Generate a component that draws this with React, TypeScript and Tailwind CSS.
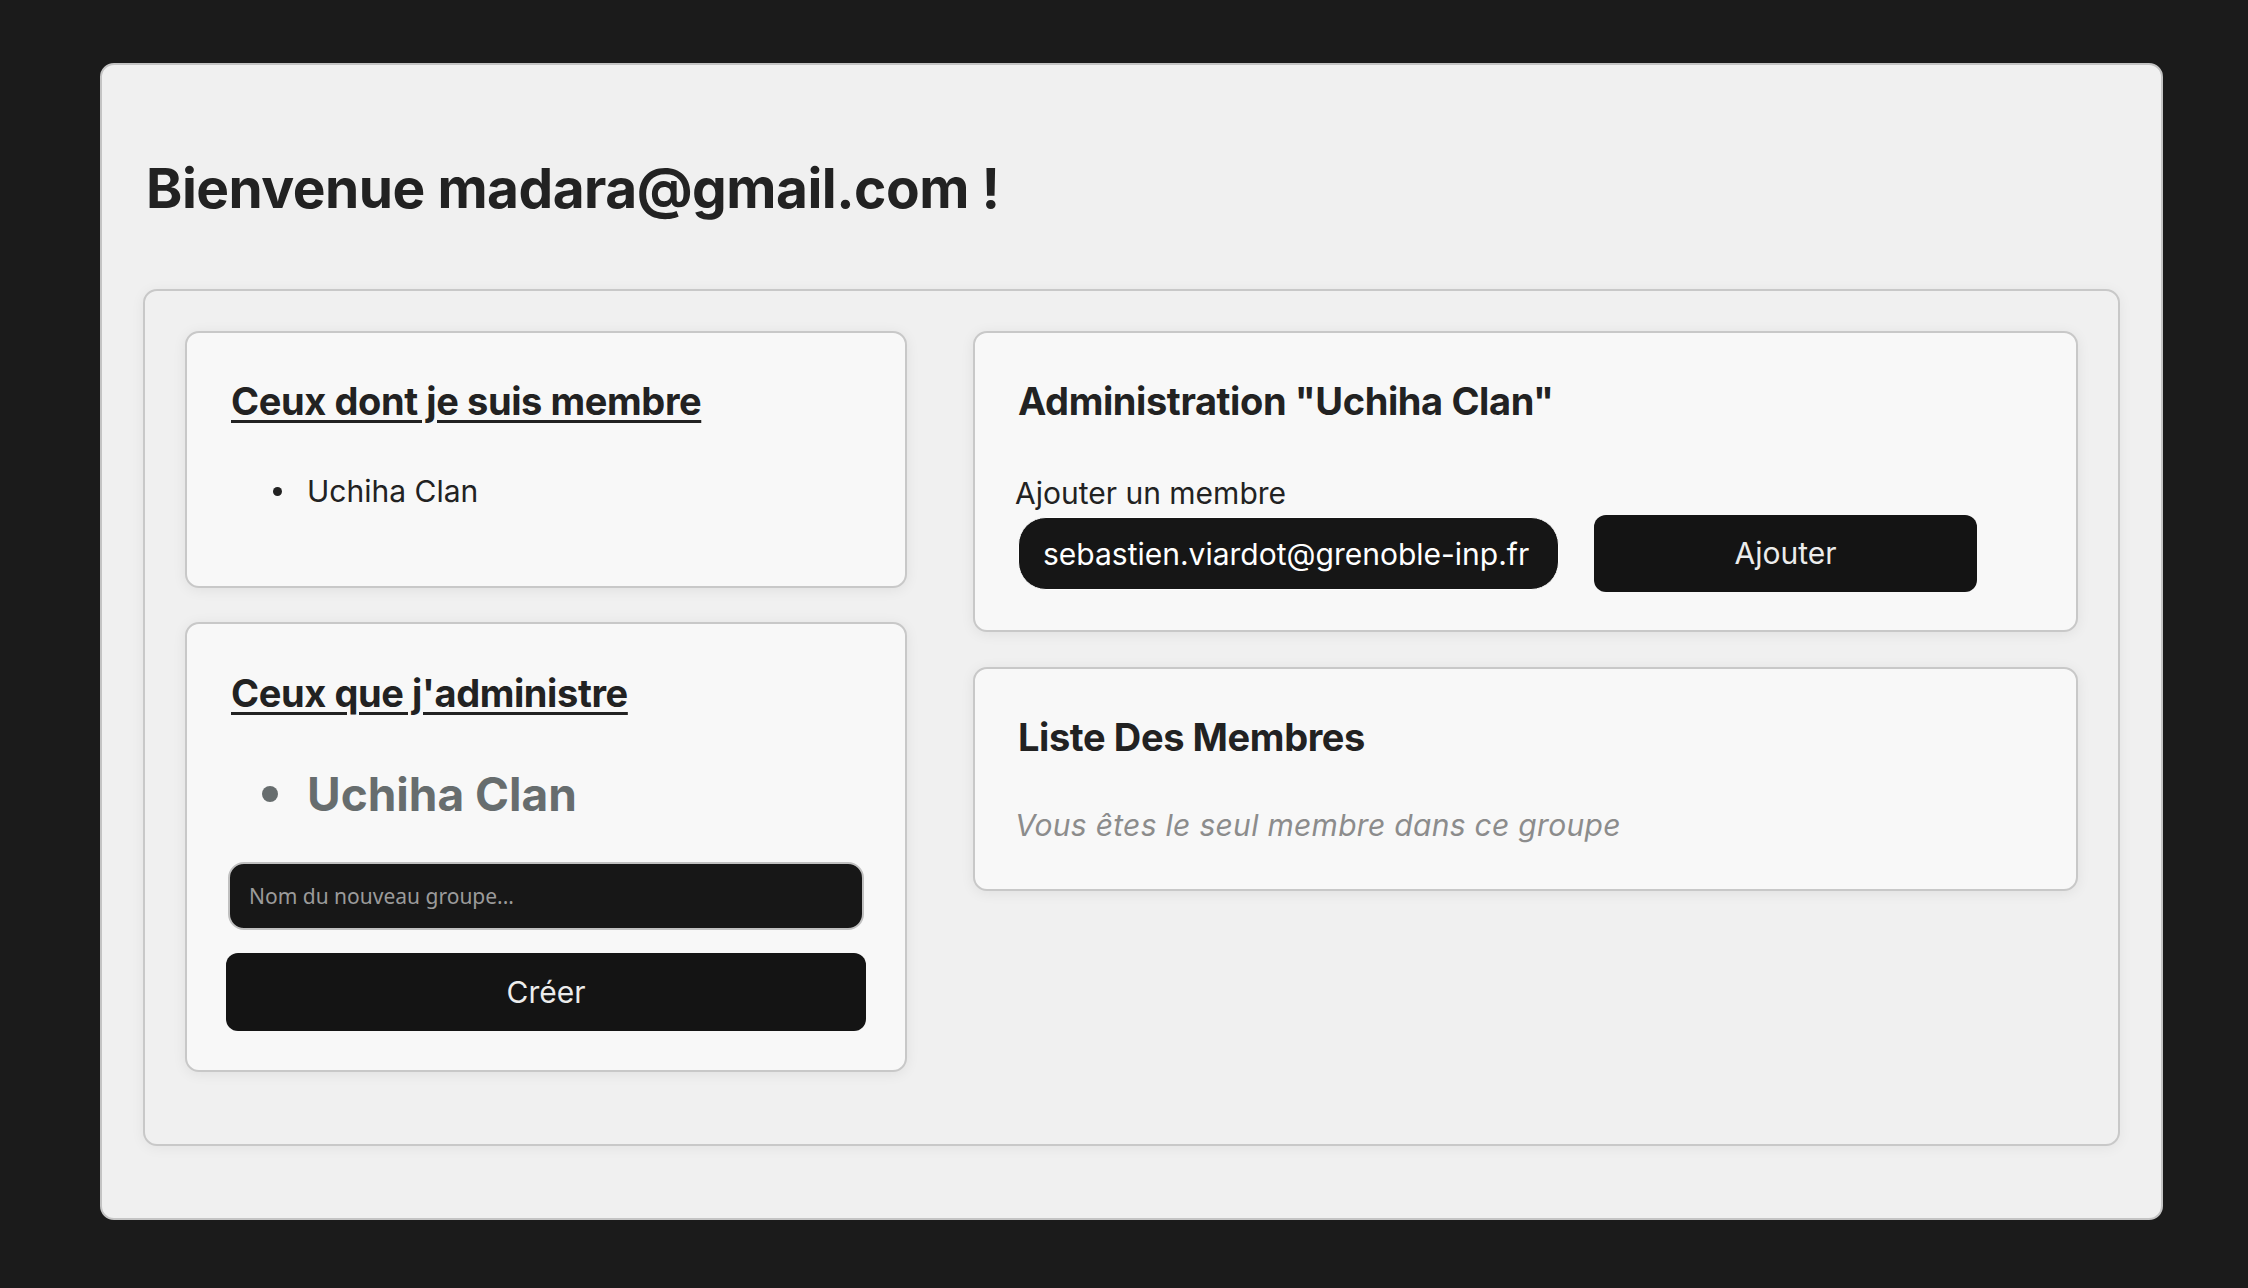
import React from 'react';

const font = { fontFamily: 'Inter, "Noto Sans", sans-serif' };

function Card({ children, className = '' }: { children: React.ReactNode; className?: string }) {
    return (
        <div
            className={`bg-[#f8f8f8] border-2 border-[#c8c8c8] rounded-[14px] shadow-[0_2px_14px_rgba(0,0,0,0.07)] ${className}`}
        >
            {children}
        </div>
    );
}

export default function App() {
    return (
        <div className="min-h-screen bg-[#1b1b1b] pt-[63px] pb-[68px] pl-[100px] pr-[85px] text-[#222]" style={font}>
            <div className="bg-[#f0f0f0] border-2 border-[#c4c4c4] rounded-[14px] px-[41px] pt-[90px] pb-[72px]">
                <h1 className="ml-[3px] text-[55px] leading-[67px] font-bold tracking-[-0.5px] text-[#222]">
                    Bienvenue madara@gmail.com !
                </h1>

                <div className="mt-[67px] bg-[#f0f0f0] border-2 border-[#c8c8c8] rounded-[14px] shadow-[0_2px_14px_rgba(0,0,0,0.06)] px-[40px] pt-[40px] pb-[72px] flex items-start gap-[66px]">
                    {/* colonne gauche */}
                    <div className="w-[722px] flex flex-col gap-[34px]">
                        <Card className="px-[44px] pt-[46px] pb-[77px]">
                            <h2 className="text-[38px] leading-[44px] font-bold tracking-[-0.4px] underline underline-offset-[5px] decoration-[3px]">
                                Ceux dont je suis membre
                            </h2>
                            <ul className="mt-[50px]">
                                <li className="flex items-center gap-[25px] pl-[42px] text-[30px] leading-[36px]">
                                    <span className="w-[9px] h-[9px] rounded-full bg-[#222]" />
                                    Uchiha Clan
                                </li>
                            </ul>
                        </Card>

                        <Card className="px-[44px] pt-[47px] pb-[39px]">
                            <h2 className="text-[38px] leading-[44px] font-bold tracking-[-0.4px] underline underline-offset-[5px] decoration-[3px]">
                                Ceux que j'administre
                            </h2>
                            <ul className="mt-[51px]">
                                <li className="flex items-center gap-[29px] pl-[31px] text-[46px] leading-[56px] font-bold text-[#676d6e]">
                                    <span className="w-[16px] h-[16px] rounded-full bg-[#676d6e]" />
                                    Uchiha Clan
                                </li>
                            </ul>
                            <input
                                className="mt-[40px] ml-[-3px] w-[636px] h-[68px] block bg-[#171717] border-2 border-[#c0c0c0] rounded-[16px] px-[19px] text-[21px] text-white placeholder:text-[#9b9b9b] outline-none"
                                style={{ fontFamily: '"Noto Sans", sans-serif' }}
                                placeholder="Nom du nouveau groupe..."
                            />
                            <button className="mt-[23px] ml-[-5px] w-[640px] h-[78px] block bg-[#141414] rounded-[12px] text-[30px] text-[#ececec]">
                                Créer
                            </button>
                        </Card>
                    </div>

                    {/* colonne droite */}
                    <div className="flex-1 flex flex-col gap-[35px]">
                        <Card className="px-[43px] pt-[46px] pb-[38px]">
                            <h2 className="text-[38px] leading-[44px] font-bold tracking-[-0.4px]">
                                Administration "Uchiha Clan"
                            </h2>
                            <div className="mt-[52px] ml-[-3px] text-[30px] leading-[36px]">Ajouter un membre</div>
                            <div className="mt-[4px] flex items-center gap-[35px]">
                                <input
                                    className="w-[541px] h-[73px] bg-[#161616] border border-white rounded-[28px] px-[24px] text-[30px] text-white outline-none"
                                    defaultValue="sebastien.viardot@grenoble-inp.fr"
                                />
                                <button className="w-[383px] h-[77px] bg-[#141414] rounded-[12px] text-[30px] text-[#ececec]">
                                    Ajouter
                                </button>
                            </div>
                        </Card>

                        <Card className="px-[43px] pt-[46px] pb-[46px]">
                            <h2 className="text-[38px] leading-[44px] font-bold tracking-[-0.4px]">Liste Des Membres</h2>
                            <p className="mt-[48px] ml-[-3px] text-[30px] leading-[36px] italic tracking-[0.3px] text-[#8c8c8c]">
                                Vous êtes le seul membre dans ce groupe
                            </p>
                        </Card>
                    </div>
                </div>
            </div>
        </div>
    );
}
